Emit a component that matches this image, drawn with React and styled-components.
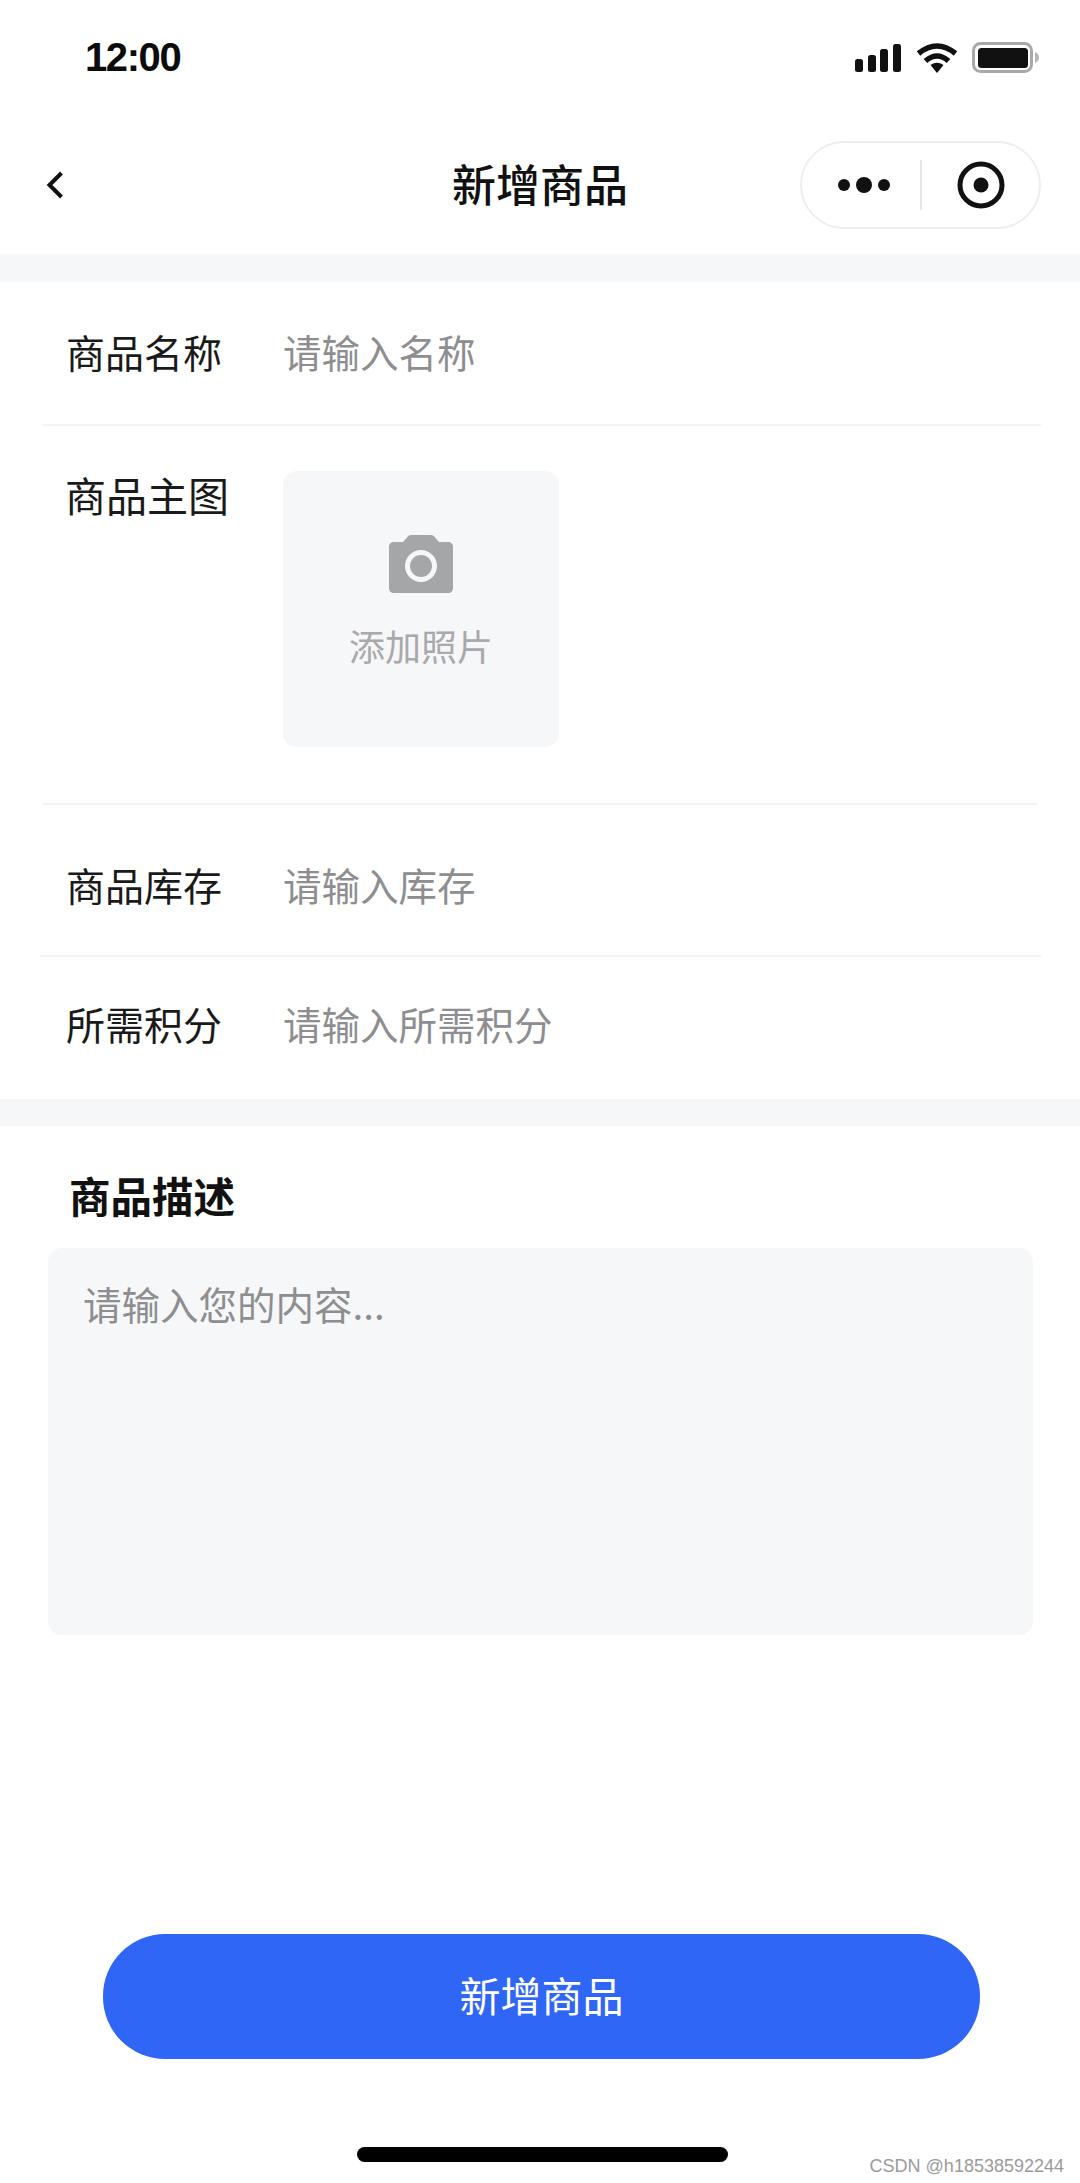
import React from 'react';
import styled, { createGlobalStyle } from 'styled-components';

const cjk = `"Noto Sans CJK SC", "Noto Sans", sans-serif`;

const GlobalStyle = createGlobalStyle`
  html, body {
    margin: 0;
    padding: 0;
    background: #fff;
  }
  * {
    box-sizing: border-box;
  }
`;

const Page = styled.div`
  position: relative;
  display: flex;
  flex-direction: column;
  width: 1080px;
  height: 2183px;
  overflow: hidden;
  background: #fff;
  font-family: ${cjk};
  color: #111;
`;

// --- status bar ---

const StatusBar = styled.div`
  display: flex;
  align-items: center;
  justify-content: space-between;
  height: 115px;
  padding: 0 41px 0 85px;
`;

const Clock = styled.div`
  font-family: "Liberation Sans", Arial, sans-serif;
  font-size: 40px;
  font-weight: 700;
  letter-spacing: -1.4px;
  color: #0c0c0c;
`;

const StatusIcons = styled.div`
  display: flex;
  align-items: center;
  gap: 14.5px;
`;

// --- navigation ---

const NavBar = styled.div`
  display: grid;
  grid-template-columns: 1fr auto 1fr;
  align-items: center;
  height: 139px;
  padding: 0 39px;
`;

const BackSlot = styled.div`
  display: flex;
  padding-left: 7px;
`;

const NavTitle = styled.div`
  padding-bottom: 3px;
  font-size: 44px;
  font-weight: 500;
  line-height: 60px;
  color: #111;
`;

const Capsule = styled.div`
  justify-self: end;
  display: flex;
  align-items: center;
  width: 241px;
  height: 88px;
  border: 2px solid #eeeeef;
  border-radius: 44px;
  background: #fff;
`;

const MoreSlot = styled.div`
  display: flex;
  align-items: center;
  justify-content: center;
  flex: 0 0 118px;
  padding-left: 6px;
`;

const TargetSlot = styled.div`
  display: flex;
  align-items: center;
  justify-content: center;
  flex: 1;
`;

const CapsuleLine = styled.div`
  width: 2px;
  height: 50px;
  background: #e8e8e9;
`;

// --- form ---

const Band = styled.div`
  height: ${(p) => p.$h}px;
  background: #f6f7f9;
`;

const Row = styled.div`
  display: flex;
  align-items: center;
  height: ${(p) => p.$h}px;
  padding: ${(p) => p.$top || 0}px 0 ${(p) => p.$bottom || 0}px 66px;
`;

const Label = styled.div`
  width: 217px;
  font-size: 39px;
  line-height: 50px;
  color: #1a1a1a;
`;

const Placeholder = styled.div`
  font-size: 38.5px;
  line-height: 50px;
  color: #8e8e90;
`;

const Divider = styled.div`
  height: 2px;
  margin: 0 ${(p) => p.$right}px 0 ${(p) => p.$left}px;
  background: #f4f4f5;
`;

const PhotoRow = styled.div`
  display: flex;
  align-items: flex-start;
  height: 377px;
  padding: 45px 0 0 65px;
`;

const PhotoLabel = styled.div`
  width: 218px;
  margin-top: -2px;
  font-size: 41px;
  line-height: 50px;
  color: #1a1a1a;
`;

const PhotoBox = styled.div`
  display: flex;
  flex-direction: column;
  align-items: center;
  width: 276px;
  height: 276px;
  padding-top: 64px;
  border-radius: 14px;
  background: #f6f7f9;
`;

const PhotoText = styled.div`
  margin-top: 27px;
  font-size: 36px;
  line-height: 50px;
  color: #a9a9ab;
`;

// --- description ---

const DescTitle = styled.div`
  margin: 44px 0 28px 69px;
  font-size: 41.5px;
  font-weight: 700;
  line-height: 50px;
  color: #111;
`;

const DescBox = styled.div`
  width: 985px;
  height: 387px;
  margin-left: 48px;
  padding: 30px 35px;
  border-radius: 14px;
  background: #f6f7f9;
  font-size: 38.5px;
  line-height: 50px;
  color: #8e8e90;
`;

// --- bottom ---

const Footer = styled.div`
  margin-top: auto;
  display: flex;
  flex-direction: column;
`;

const SubmitButton = styled.button`
  width: 877px;
  height: 125px;
  margin-left: 103px;
  padding: 0 0 5px;
  border: none;
  border-radius: 62px;
  background: #2f66f6;
  font-family: ${cjk};
  font-size: 41px;
  color: #fff;
`;

const HomeBar = styled.div`
  width: 371px;
  height: 15px;
  margin: 88px 0 21px 357px;
  border-radius: 8px;
  background: #000;
`;

const Watermark = styled.div`
  position: absolute;
  right: 16px;
  bottom: 8px;
  font-family: "Liberation Sans", Arial, sans-serif;
  font-size: 18px;
  line-height: 18px;
  color: #9b9b9b;
`;

const SignalIcon = () => (
  <svg width="46" height="28" viewBox="0 0 46 28" fill="#111">
    <rect x="0" y="15" width="8" height="13" rx="2.5" />
    <rect x="13" y="11" width="8" height="17" rx="2.5" />
    <rect x="25" y="5" width="8" height="23" rx="2.5" />
    <rect x="38" y="0" width="8" height="28" rx="2.5" />
  </svg>
);

const WifiIcon = () => (
  <svg width="42" height="30" viewBox="0 0 42 30" fill="none" stroke="#111" strokeWidth="5.5">
    <path d="M2.5 10.5Q21 -4.5 39.5 10.5" />
    <path d="M9.5 18Q21 8 32.5 18" />
    <path d="M14.5 22Q21 17.5 27.5 22L21 30Z" fill="#111" stroke="none" />
  </svg>
);

const BatteryIcon = () => (
  <svg width="67" height="31" viewBox="0 0 67 31">
    <rect x="1.5" y="1.5" width="58" height="28" rx="7" fill="none" stroke="#a9a9a9" strokeWidth="3" />
    <rect x="6" y="6" width="50" height="20" rx="3.5" fill="#111" />
    <path d="M63 10C65.5 11 67 13 67 15.5C67 18 65.5 20 63 21Z" fill="#b5b5b5" />
  </svg>
);

const BackIcon = () => (
  <svg width="18" height="28" viewBox="0 0 18 28" fill="none" stroke="#111" strokeWidth="4">
    <path d="M15.5 2L3.5 14L15.5 26" />
  </svg>
);

const MoreIcon = () => (
  <svg width="52" height="18" viewBox="0 0 52 18" fill="#111">
    <circle cx="6" cy="9" r="6" />
    <circle cx="26" cy="9" r="8" />
    <circle cx="46" cy="9" r="6" />
  </svg>
);

const TargetIcon = () => (
  <svg width="48" height="48" viewBox="0 0 48 48">
    <circle cx="24" cy="24" r="21" fill="none" stroke="#111" strokeWidth="5" />
    <circle cx="24" cy="24" r="7.5" fill="#111" />
  </svg>
);

const CameraIcon = () => (
  <svg width="64" height="58" viewBox="0 0 64 58">
    <path
      d="M22 0H42C44 0 45 1 46 2.5L50 7H59C62 7 64 9 64 12V53C64 56 62 58 59 58H5C2 58 0 56 0 53V12C0 9 2 7 5 7H14L18 2.5C19 1 20 0 22 0Z"
      fill="#a5a6a8"
    />
    <circle cx="32" cy="31" r="13.5" fill="none" stroke="#f6f7f9" strokeWidth="5" />
  </svg>
);

const App = () => (
  <>
    <GlobalStyle />
    <Page>
      <StatusBar>
        <Clock>12:00</Clock>
        <StatusIcons>
          <SignalIcon />
          <WifiIcon />
          <BatteryIcon />
        </StatusIcons>
      </StatusBar>

      <NavBar>
        <BackSlot>
          <BackIcon />
        </BackSlot>
        <NavTitle>新增商品</NavTitle>
        <Capsule>
          <MoreSlot>
            <MoreIcon />
          </MoreSlot>
          <CapsuleLine />
          <TargetSlot>
            <TargetIcon />
          </TargetSlot>
        </Capsule>
      </NavBar>

      <Band $h={28} />

      <Row $h={142} $bottom={5}>
        <Label>商品名称</Label>
        <Placeholder>请输入名称</Placeholder>
      </Row>
      <Divider $left={43} $right={39} />

      <PhotoRow>
        <PhotoLabel>商品主图</PhotoLabel>
        <PhotoBox>
          <CameraIcon />
          <PhotoText>添加照片</PhotoText>
        </PhotoBox>
      </PhotoRow>
      <Divider $left={43} $right={43} />

      <Row $h={150} $top={8}>
        <Label>商品库存</Label>
        <Placeholder>请输入库存</Placeholder>
      </Row>
      <Divider $left={40} $right={39} />

      <Row $h={142} $bottom={10}>
        <Label>所需积分</Label>
        <Placeholder>请输入所需积分</Placeholder>
      </Row>

      <Band $h={27} />

      <DescTitle>商品描述</DescTitle>
      <DescBox>请输入您的内容...</DescBox>

      <Footer>
        <SubmitButton>新增商品</SubmitButton>
        <HomeBar />
      </Footer>

      <Watermark>CSDN @h18538592244</Watermark>
    </Page>
  </>
);

export default App;
